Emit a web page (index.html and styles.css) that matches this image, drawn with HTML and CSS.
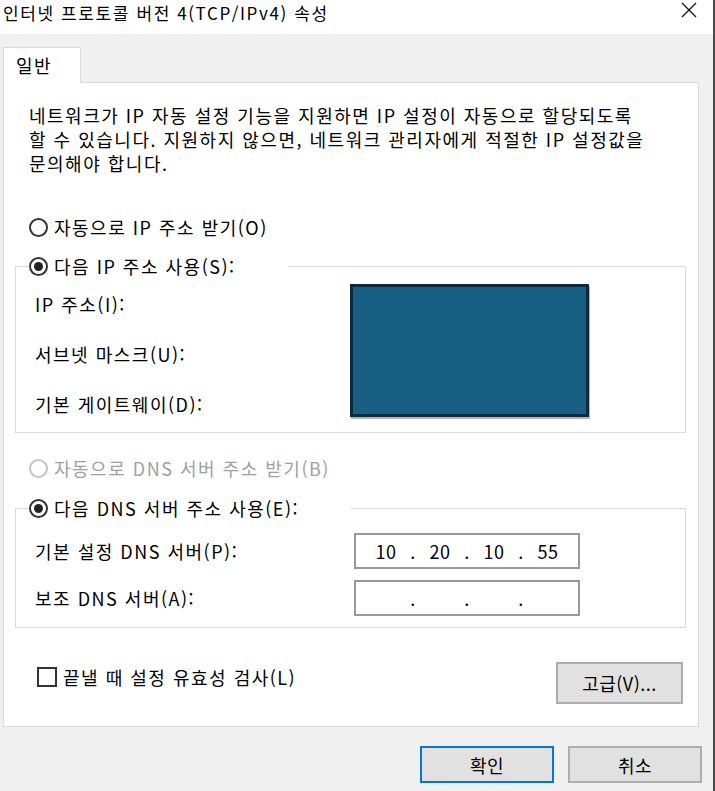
FILE: index.html
```html
<!DOCTYPE html>
<html lang="ko">
<head>
<meta charset="utf-8">
<title>인터넷 프로토콜 버전 4(TCP/IPv4) 속성</title>
<link rel="stylesheet" href="styles.css">
</head>
<body>
<div class="window">
  <div class="titlebar">
    <div class="title">인터넷 프로토콜 버전 4(TCP/IPv4) 속성</div>
    <div class="close">
      <svg width="16" height="16" viewBox="0 0 16 16"><path d="M1 1 L15 15 M15 1 L1 15" stroke="#111" stroke-width="1.3" fill="none"/></svg>
    </div>
  </div>
  <div class="content">
    <div class="tabs"><div class="tab">일반</div></div>
    <div class="panel">
      <p class="desc">네트워크가 IP 자동 설정 기능을 지원하면 IP 설정이 자동으로 할당되도록<br>할 수 있습니다. 지원하지 않으면, 네트워크 관리자에게 적절한 IP 설정값을<br>문의해야 합니다.</p>
      <div class="option first"><span class="radio"></span><span>자동으로 IP 주소 받기(O)</span></div>
      <fieldset class="group g1">
        <legend class="option"><span class="radio checked"></span><span>다음 IP 주소 사용(S):</span></legend>
        <div class="g1-body">
          <div class="labels">
            <div class="lbl">IP 주소(I):</div>
            <div class="lbl">서브넷 마스크(U):</div>
            <div class="lbl">기본 게이트웨이(D):</div>
          </div>
          <div class="redact"></div>
        </div>
      </fieldset>
      <div class="option disabled dns-auto"><span class="radio"></span><span>자동으로 DNS 서버 주소 받기(B)</span></div>
      <fieldset class="group g2">
        <legend class="option"><span class="radio checked"></span><span>다음 DNS 서버 주소 사용(E):</span></legend>
        <div class="g2-body">
          <div class="row">
            <div class="rlabel">기본 설정 DNS 서버(P):</div>
            <div class="ipbox"><span class="oct">10</span><span class="dot">.</span><span class="oct">20</span><span class="dot">.</span><span class="oct">10</span><span class="dot">.</span><span class="oct">55</span></div>
          </div>
          <div class="row">
            <div class="rlabel">보조 DNS 서버(A):</div>
            <div class="ipbox"><span class="oct"></span><span class="dot">.</span><span class="oct"></span><span class="dot">.</span><span class="oct"></span><span class="dot">.</span><span class="oct"></span></div>
          </div>
        </div>
      </fieldset>
      <div class="bottom">
        <div class="option check"><span class="checkbox"></span><span>끝낼 때 설정 유효성 검사(L)</span></div>
        <button class="btn adv">고급(V)...</button>
      </div>
    </div>
    <div class="actions">
      <button class="btn ok">확인</button>
      <button class="btn">취소</button>
    </div>
  </div>
</div>
</body>
</html>
```

FILE: styles.css
```css
* { box-sizing: border-box; }
html, body { margin: 0; padding: 0; }
body {
  font-family: "Noto Sans CJK KR", "Noto Sans", sans-serif;
  font-size: 18px;
  line-height: 24px;
  letter-spacing: 1.5px;
  color: #111;
  background: #f0f0f0;
}
.window {
  width: 715px;
  height: 791px;
  background: #f0f0f0;
  border-right: 2px solid #4a4a4a;
  display: flex;
  flex-direction: column;
  overflow: hidden;
}
.titlebar {
  height: 34px;
  background: #fff;
  display: flex;
  justify-content: space-between;
  align-items: flex-start;
  flex: none;
}
.title {
  font-size: 17px;
  line-height: 25px;
  padding: 0 0 0 3px;
  letter-spacing: 1.6px;
  color: #000;
}
.close {
  width: 16px;
  height: 16px;
  margin: 2px 16px 0 0;
}
.close svg { display: block; }
.content {
  padding: 13px 14px 0 3px;
  display: flex;
  flex-direction: column;
}
.tabs { display: flex; }
.tab {
  width: 78px;
  height: 36px;
  margin-bottom: -1px;
  padding: 5px 0 0 12px;
  background: #fff;
  border: 1px solid #d9d9d9;
  border-bottom: none;
  position: relative;
  z-index: 1;
  color: #000;
}
.panel {
  height: 645px;
  background: #fff;
  border: 1px solid #d9d9d9;
  display: flex;
  flex-direction: column;
}
.desc {
  margin: 0;
  padding: 20px 0 0 25px;
  color: #000;
}
.option {
  display: flex;
  align-items: center;
  gap: 6px;
  height: 24px;
  color: #000;
}
.option.first { margin: 40px 0 0 25px; }
.option.disabled { color: #a0a0a0; }
.dns-auto { margin: 23px 0 0 25px; }
.radio {
  width: 19px;
  height: 19px;
  border: 2px solid #333;
  border-radius: 50%;
  background: #fff;
  display: flex;
  align-items: center;
  justify-content: center;
  flex: none;
}
.radio.checked::after {
  content: "";
  width: 9px;
  height: 9px;
  border-radius: 50%;
  background: #222;
}
.disabled .radio { border-color: #c4c4c4; }
.group {
  margin: 0 12px 0 11px;
  padding: 0;
  border: 1px solid #dcdcdc;
  min-width: 0;
}
.g1 { margin-top: 15px; }
.g2 { margin-top: 16px; }
.group legend {
  margin-left: 12px;
  padding: 0 52px 0 1px;
}
.g1-body {
  display: flex;
  padding: 6px 0 15px 19px;
}
.labels {
  width: 315px;
  padding-top: 8px;
  display: flex;
  flex-direction: column;
  gap: 26px;
}
.lbl { color: #000; }
.redact {
  width: 239px;
  height: 133px;
  background: #176083;
  border: 3px solid #0b2a3d;
  box-shadow: 1px 2px 0 #b5b5b5;
}
.g2-body {
  padding: 13px 0 11px 19px;
  display: flex;
  flex-direction: column;
  gap: 11px;
}
.row {
  display: flex;
  align-items: center;
}
.rlabel { width: 319px; color: #000; }
.ipbox {
  width: 226px;
  height: 36px;
  border: 2px solid #999;
  display: flex;
  align-items: center;
  padding-left: 7px;
  color: #000;
  letter-spacing: 0.5px;
}
.oct { width: 46px; text-align: center; }
.dot { width: 8px; text-align: center; }
.bottom {
  margin: 34px 15px 0 33px;
  display: flex;
  justify-content: space-between;
  align-items: flex-start;
}
.check { margin-top: 3px; }
.checkbox {
  width: 20px;
  height: 20px;
  border: 2px solid #333;
  background: #fff;
  flex: none;
}
.btn {
  font-family: inherit;
  font-size: 18px;
  line-height: 24px;
  letter-spacing: 0.5px;
  color: #000;
  background: #e1e1e1;
  border: 2px solid #adadad;
  padding: 0;
}
.adv { width: 127px; height: 42px; }
.actions {
  margin: 19px -3px 0 0;
  display: flex;
  justify-content: flex-end;
  gap: 14px;
}
.actions .btn { width: 134px; height: 37px; }
.actions .btn.ok { border-color: #0078d7; }
```
